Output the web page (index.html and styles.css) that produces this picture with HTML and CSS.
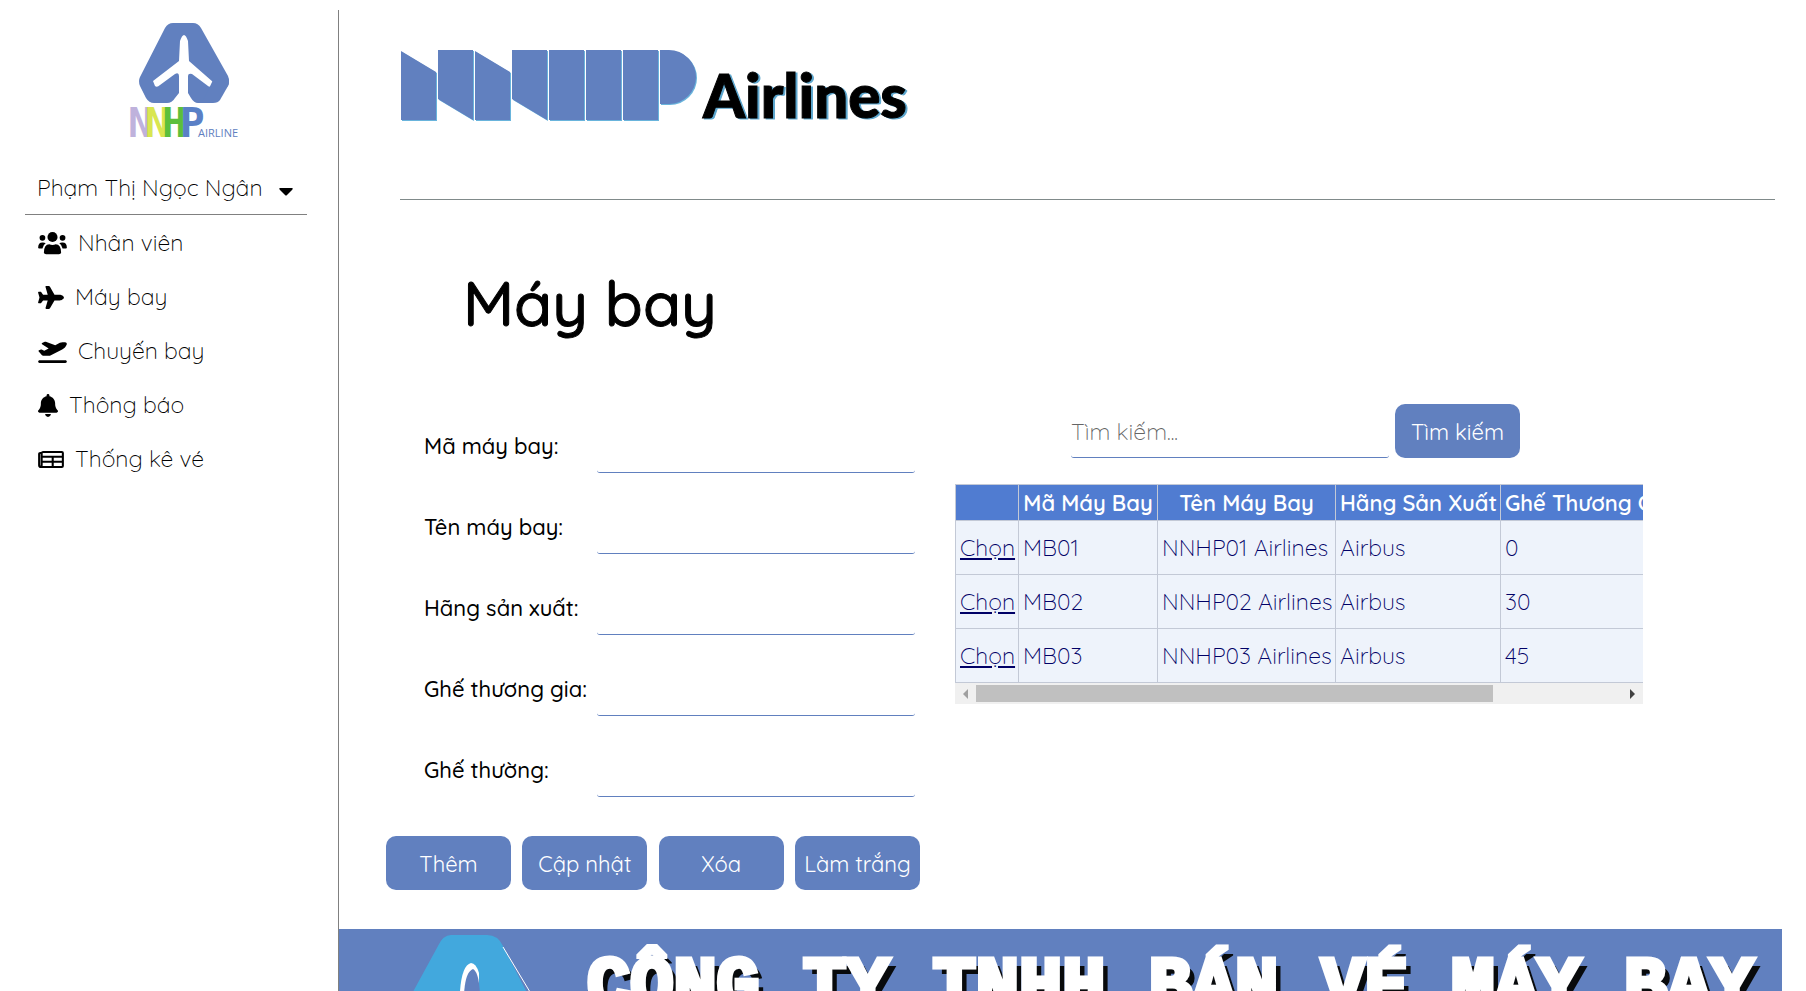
FILE: index.html
```html
<!DOCTYPE html>
<html lang="vi">
<head>
<meta charset="utf-8">
<title>Máy bay - NNHP Airlines</title>
<link rel="stylesheet" href="styles.css">
</head>
<body>
<div class="app">
  <aside class="sidebar">
    <svg class="brand" viewBox="0 0 110 120" role="img" aria-label="NNHP Airline">
      <path class="brand-shape" d="M44 3H64Q69 3 72 8L99 56Q101 61 99 66L82 79Q79 83 74 83H69Q65 83 62 78L59 73V56Q59 53 63 54L79 66Q81 68 83 65L84 62L60 41L59 21Q55 9 51 21L50 41L24 61L26 66Q28 68 31 65L46 54Q50 52 50 56V73L46 78Q43 83 38 83H25Q20 83 17 78L11 66Q9 61 11 57L36 8Q39 3 44 3Z"/>
      <path class="brand-shape" d="M84 60L99 58Q101 62 99 66L91 80Q89 83 84 83H73Z"/>
      <text class="brand-name" x="-1 16 33 51" y="117"><tspan class="n1">N</tspan><tspan class="n2">N</tspan><tspan class="n3">H</tspan><tspan class="n4">P</tspan></text>
      <text class="brand-sub" x="69" y="117">AIRLINE</text>
    </svg>
    <button class="user" type="button">Phạm Thị Ngọc Ngân
      <svg class="caret" viewBox="0 0 14 8"><path d="M1 0H13Q14.500 .5 13 2L8 7Q7 8 6 7L1 2Q-.5 .5 1 0Z"/></svg>
    </button>
    <nav class="menu">
      <a href="#"><svg class="wide" viewBox="0 0 640 512"><circle cx="320" cy="112" r="112"/><circle cx="96" cy="128" r="64"/><circle cx="544" cy="128" r="64"/><path d="M128 464Q128 272 248 272Q320 302 392 272Q512 272 512 464Q506 496 464 496H176Q134 496 128 464ZM0 352Q0 232 96 232Q140 228 168 252Q106 292 96 368H24Q0 368 0 352ZM640 352Q640 232 544 232Q500 228 472 252Q534 292 544 368H616Q640 368 640 352Z"/></svg>Nhân viên</a>
      <a href="#"><svg class="mid" viewBox="0 0 576 512"><path d="M482.300 192c34.200 0 93.700 29 93.700 64c0 36-59.500 64-93.700 64l-116.600 0L265.200 495.900c-5.700 10-16.300 16.100-27.800 16.100l-56.200 0c-10.600 0-18.300-10.200-15.400-20.400l49-171.600L112 320 68.800 377.600c-3 4-7.800 6.400-12.800 6.400l-42 0c-7.800 0-14-6.300-14-14c0-1.300 .2-2.600 .5-3.900L32 256 .5 145.900c-.4-1.300-.5-2.600-.5-3.900c0-7.800 6.300-14 14-14l42 0c5 0 9.800 2.400 12.800 6.400L112 192l102.900 0-49-171.600C162.900 10.200 170.600 0 181.200 0l56.200 0c11.500 0 22.100 6.200 27.800 16.100L365.700 192l116.600 0z"/></svg>Máy bay</a>
      <a href="#"><svg class="wide" viewBox="0 0 640 512"><path d="M381 114.900L186.100 41.800c-16.700-6.200-35.200-5.300-51.100 2.700L89.100 67.400C78 73 77.200 88.500 87.600 95.200l146.900 94.500L136 240 77.800 214.100c-8.700-3.900-18.800-3.700-27.300 .6L18.300 230.800c-9.300 4.700-11.800 16.800-5 24.700l73.100 85.300c6.100 7.100 15 11.200 24.300 11.200H248.400c5 0 9.900-1.200 14.300-3.400L535.600 212.200c46.500-23.300 82.500-63.300 100.800-112C645.900 75 627.200 48 600.200 48H542.800c-20.200 0-40.200 4.800-58.200 14L381 114.900zM0 480c0 17.700 14.300 32 32 32H608c17.700 0 32-14.300 32-32s-14.300-32-32-32H32c-17.700 0-32 14.300-32 32z"/></svg>Chuyến bay</a>
      <a href="#"><svg class="slim" viewBox="0 0 448 512"><path d="M224 0c-17.700 0-32 14.300-32 32V51.200C119 66 64 130.600 64 208v18.800c0 47-17.300 92.400-48.500 127.600l-7.400 8.300c-8.400 9.400-10.400 22.900-5.300 34.400S19.400 416 32 416H416c12.600 0 24-7.400 29.200-18.900s3.100-25-5.300-34.400l-7.400-8.300C401.300 319.200 384 273.900 384 226.800V208c0-77.400-55-142-128-156.800V32c0-17.700-14.300-32-32-32zm45.300 493.300c12-12 18.700-28.300 18.700-45.300H160c0 17 6.700 33.300 18.700 45.300s28.300 18.700 45.300 18.700s33.300-6.700 45.300-18.700z"/></svg>Thông báo</a>
      <a href="#"><svg class="mid" viewBox="0 0 576 512"><path class="outline" d="M112 88H528Q552 88 552 112V400Q552 424 528 424H64Q24 424 24 384V130Q24 112 48 112H80V380Q80 424 50 424M112 88Q88 88 88 112M100 194H550M100 308H550M326 194V424"/></svg>Thống kê vé</a>
    </nav>
  </aside>

  <div class="content">
    <main class="main">
      <header class="banner">
        <svg class="wordmark" viewBox="0 0 510 74" role="img" aria-label="NNHP Airlines">
          <g class="bars">
            <path d="M1 1L36 22V70H1Z"/><path d="M38 0H73V70L38 49Z"/><path d="M75 1L110 22V70H75Z"/><path d="M112 0H147V70L112 49Z"/><path d="M149 0H184V70H149Z"/><path d="M186 0H221V70H186Z"/><path d="M223 0H258V70H223Z"/><path d="M260 0H269A27 27 0 0 1 269 54H260Z"/>
          </g>
          <text class="wordmark-text" x="303" y="68">Airlines</text>
        </svg>
      </header>
      <h1>Máy bay</h1>
      <div class="columns">
        <form class="form">
          <div class="fields">
            <label for="ma">Mã máy bay:</label><input id="ma" type="text">
            <label for="ten">Tên máy bay:</label><input id="ten" type="text">
            <label for="hang">Hãng sản xuất:</label><input id="hang" type="text">
            <label for="gia">Ghế thương gia:</label><input id="gia" type="text">
            <label for="thuong">Ghế thường:</label><input id="thuong" type="text">
          </div>
          <div class="actions">
            <button class="btn" type="button">Thêm</button>
            <button class="btn" type="button">Cập nhật</button>
            <button class="btn" type="button">Xóa</button>
            <button class="btn" type="button">Làm trắng</button>
          </div>
        </form>
        <section class="list">
          <form class="search">
            <input type="text" aria-label="Tìm kiếm" placeholder="Tìm kiếm...">
            <button class="btn" type="button">Tìm kiếm</button>
          </form>
          <div class="table-box">
            <table>
              <thead><tr><th class="c1"></th><th class="c2">Mã Máy Bay</th><th class="c3">Tên Máy Bay</th><th class="c4">Hãng Sản Xuất</th><th class="c5">Ghế Thương Gia</th></tr></thead>
              <tbody>
                <tr><td><a href="#">Chọn</a></td><td>MB01</td><td>NNHP01 Airlines</td><td>Airbus</td><td>0</td></tr>
                <tr><td><a href="#">Chọn</a></td><td>MB02</td><td>NNHP02 Airlines</td><td>Airbus</td><td>30</td></tr>
                <tr><td><a href="#">Chọn</a></td><td>MB03</td><td>NNHP03 Airlines</td><td>Airbus</td><td>45</td></tr>
              </tbody>
            </table>
          </div>
          <div class="scrollbar">
            <svg class="arrow off" viewBox="0 0 5 10"><path d="M5 0V10L0 5Z"/></svg>
            <div class="track"><div class="thumb"></div></div>
            <svg class="arrow" viewBox="0 0 5 10"><path d="M0 0V10L5 5Z"/></svg>
          </div>
        </section>
      </div>
    </main>
    <footer class="footer">
      <svg class="footer-logo" viewBox="0 0 174 110">
        <path class="sky" d="M67 0H103Q114 0 119 11L174 118V110H0L54 11Q59 0 67 0Z"/>
        <path class="edge" d="M119 12L146 57L176 110"/>
        <path class="hole-edge" d="M76 110V56Q78 30 87 28Q92 28 95 38V110Z"/>
        <path class="hole" d="M80 110V60Q81 37 89 34Q95 37 96 60V110Z"/>
      </svg>
      <p class="company">CÔNG TY TNHH BÁN VÉ MÁY BAY</p>
    </footer>
  </div>
</div>
</body>
</html>
```
FILE: styles.css
```css
* { box-sizing: border-box; }

body {
  margin: 0;
  background: #fff;
  color: #000;
  font: 300 23px/30px Quicksand, "Open Sans", sans-serif;
}

input, button {
  font: inherit;
  color: inherit;
}

.app {
  display: flex;
  height: 100vh;
  padding: 10px 24px 0 25px;
  overflow: hidden;
}

/* Sidebar */
.sidebar {
  flex: 0 0 282px;
  margin-right: 31px;
}

.brand {
  display: block;
  width: 110px;
  height: 120px;
  margin: 10px 0 0 104px;
  overflow: visible;
}

.brand-shape { fill: #6180bf; }
.brand-name { font: bold 41px "DejaVu Sans Mono", monospace; }
.n1 { fill: #bfb2dc; }
.n2 { fill: #d9e650; }
.n3 { fill: #5cbf3c; }
.n4 { fill: #5a80c6; }
.brand-sub { font: 400 11px "Open Sans", sans-serif; fill: #5f80c0; }

.user {
  display: flex;
  align-items: center;
  justify-content: space-between;
  width: 100%;
  height: 55px;
  margin-top: 20px;
  padding: 2px 14px 0 12px;
  border: 0;
  border-bottom: 1px solid #808080;
  background: none;
  white-space: nowrap;
}

.caret {
  flex: none;
  width: 14px;
  height: 8px;
  margin-top: 8px;
}

.menu {
  display: grid;
  padding-top: 1px;
}

.menu a {
  display: flex;
  align-items: center;
  gap: 11px;
  height: 54px;
  padding: 0 13px;
  color: #000;
  text-decoration: none;
}

.menu svg { height: 23px; }
.wide { width: 29px; }
.mid { width: 26px; }
.slim { width: 20px; }

.outline {
  fill: none;
  stroke: #000;
  stroke-width: 46;
}

/* Main column */
.content {
  display: flex;
  flex: 1;
  flex-direction: column;
  min-width: 0;
  border-left: 1px solid #808080;
}

.main {
  flex: 0 0 auto;
  padding: 0 7px 39px 47px;
}

.banner {
  height: 190px;
  margin-left: 14px;
  padding-top: 40px;
  border-bottom: 1px solid #808a8a;
}

.wordmark {
  display: block;
  width: 510px;
  height: 74px;
  overflow: visible;
}

.bars {
  fill: #6180bf;
  filter: drop-shadow(1px 1px 0 #69b4dc);
}

.wordmark-text {
  font: 900 60px Lato, sans-serif;
  stroke: #000;
  stroke-width: 1;
  filter: drop-shadow(2px 1px 0 #5aa5cd);
}

h1 {
  margin: 63px 0 0 77px;
  font-size: 62px;
  font-weight: 500;
  line-height: 80px;
  -webkit-text-stroke: 1px #000;
}

.columns {
  display: flex;
  align-items: flex-start;
  gap: 35px;
  margin-top: 61px;
}

.form { width: 534px; }

.fields {
  display: grid;
  grid-template-columns: 173px 318px;
  row-gap: 27px;
  padding: 15px 0 0 38px;
}

.fields label {
  padding-top: 12px;
  font-size: 22px;
  font-weight: 500;
}

.fields input, .search input {
  width: 318px;
  height: 54px;
  padding: 2px 0 0;
  border: 0;
  border-bottom: 1px solid #6180bf;
  border-radius: 3px;
  background: none;
  outline: 0;
}

.search input::placeholder { color: #656565; }

.actions {
  display: flex;
  justify-content: space-between;
  margin-top: 39px;
}

.btn {
  width: 125px;
  height: 54px;
  padding: 2px 0 0;
  border: 0;
  border-radius: 10px;
  background: #6180bf;
  color: #fff;
  font-size: 22px;
  font-weight: 400;
  white-space: nowrap;
}

.list {
  flex: 0 1 688px;
  min-width: 0;
}

.search {
  display: flex;
  gap: 6px;
  padding-left: 116px;
}

.table-box {
  margin-top: 26px;
  overflow: hidden;
}

table {
  width: 720px;
  table-layout: fixed;
  border-collapse: collapse;
  color: #000066;
  white-space: nowrap;
}

th, td {
  padding: 0 4px;
  border: 1px solid #c3c9d6;
  background: #eef3fb;
  text-align: left;
}

th {
  height: 36px;
  background: #507cd1;
  color: #fff;
  font-size: 22px;
  font-weight: 600;
  text-align: center;
}

td { height: 54px; }
td a { color: inherit; }
.c1 { width: 63px; }
.c2 { width: 139px; }
.c3 { width: 178px; }
.c4 { width: 165px; }

.scrollbar {
  display: flex;
  align-items: center;
  height: 21px;
  padding: 0 8px;
  background: #f0f0f0;
}

.arrow { width: 5px; height: 10px; fill: #404040; }
.arrow.off { fill: #a0a0a0; }

.track {
  flex: 1;
  padding: 0 8px;
}

.thumb {
  width: 80%;
  height: 17px;
  background: #c0c0c0;
}

/* Footer */
.footer {
  display: flex;
  flex: 0 0 auto;
  align-items: flex-start;
  height: 160px;
  padding: 6px 30px 0 45px;
  background: #6180bf;
}

.footer-logo { flex: none; width: 174px; height: 110px; }
.sky { fill: #42a8dd; }
.edge { fill: none; stroke: #fff; stroke-width: 1; }
.hole-edge { fill: #fff; }
.hole { fill: #6180bf; }

.company {
  margin: 0 0 0 29px;
  color: #fff;
  font: bold 72px/106px "Liberation Mono", monospace;
  white-space: nowrap;
  -webkit-text-stroke: 5px #fff;
  text-shadow: 7px 7px 0 #080a0c;
}
```
